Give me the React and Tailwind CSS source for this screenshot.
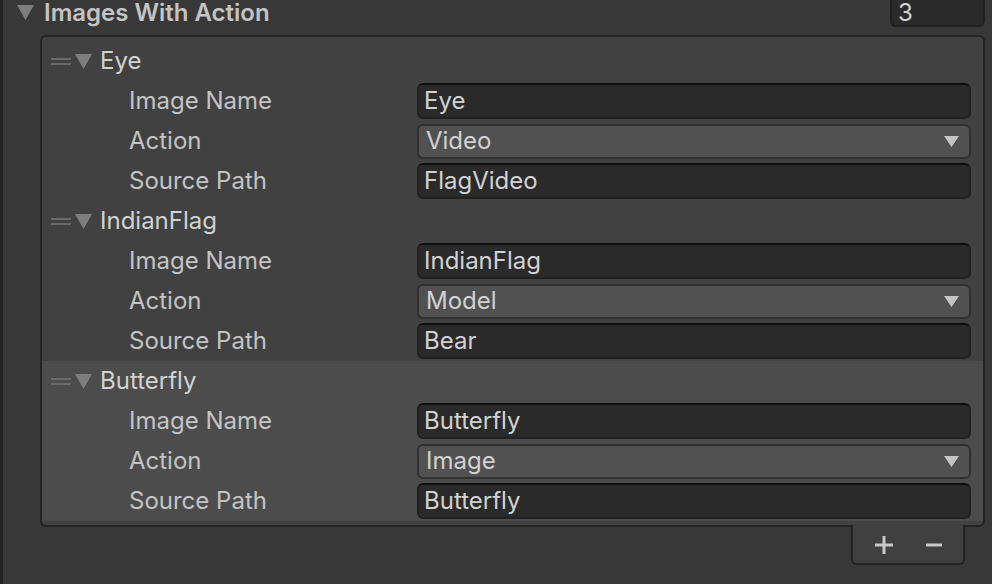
import React from 'react';

const elements = [
  { name: 'Eye', imageName: 'Eye', action: 'Video', source: 'FlagVideo' },
  { name: 'IndianFlag', imageName: 'IndianFlag', action: 'Model', source: 'Bear' },
  { name: 'Butterfly', imageName: 'Butterfly', action: 'Image', source: 'Butterfly', selected: true },
];

function Triangle({ className }) {
  return (
    <svg width="17" height="15" viewBox="0 0 17 15" className={className}>
      <path d="M0 0 H17 L8.5 15 Z" fill="currentColor" />
    </svg>
  );
}

function TextField({ value }) {
  return (
    <div className="h-[36px] flex-1 flex items-center rounded-[6px] bg-[#2a2a2a] border-2 border-[#212121] border-t-[#0f0f0f] px-[5px] text-[#d2d2d2]">
      {value}
    </div>
  );
}

function Dropdown({ value }) {
  return (
    <div className="h-[35px] flex-1 flex items-center justify-between rounded-[6px] bg-[#515151] border-2 border-[#303030] pl-[7px] pr-[10px] text-[#d2d2d2]">
      <span>{value}</span>
      <svg width="15" height="11" viewBox="0 0 15 11">
        <path d="M0 0 H15 L7.5 11 Z" fill="#c4c4c4" />
      </svg>
    </div>
  );
}

function Row({ label, children }) {
  return (
    <div className="h-[40px] flex items-center pr-[12px]">
      <div className="w-[375px] pl-[87px] text-[#c4c4c4]">{label}</div>
      {children}
    </div>
  );
}

function Element({ el }) {
  return (
    <div className={el.selected ? 'bg-[#4c4c4c]' : ''}>
      <div className="h-[40px] flex items-center">
        <div className="ml-[9px] w-[20px] flex flex-col gap-[3px]">
          <div className="h-[2px] bg-[#6a6a6a]" />
          <div className="h-[2px] bg-[#6a6a6a]" />
        </div>
        <Triangle className="ml-[4px] text-[#7e7e7e]" />
        <span className="ml-[8px] text-[#d2d2d2]">{el.name}</span>
      </div>
      <Row label="Image Name">
        <TextField value={el.imageName} />
      </Row>
      <Row label="Action">
        <Dropdown value={el.action} />
      </Row>
      <Row label="Source Path">
        <TextField value={el.source} />
      </Row>
    </div>
  );
}

export default function App() {
  return (
    <div className="w-[992px] h-[584px] bg-[#383838] flex overflow-hidden font-['Inter',sans-serif] text-[24px] leading-[26px]">
      <div className="w-[3px] bg-[#232323]" />
      <div className="flex-1 flex flex-col">
        {/* foldout header + array size */}
        <div className="h-[35px] flex items-start pr-[7px]">
          <Triangle className="ml-[14px] mt-[5px] text-[#7e7e7e]" />
          <span className="ml-[10px] font-semibold text-[#c4c4c4] leading-[25px]">Images With Action</span>
          <div className="ml-auto w-[95px] h-[27px] rounded-b-[6px] bg-[#2a2a2a] border-2 border-t-0 border-[#212121] pl-[6px] flex items-center text-[#d2d2d2]">
            3
          </div>
        </div>

        {/* reorderable list */}
        <div className="ml-[37px] mr-[7px] rounded-[6px] border-2 border-[#232323] bg-[#414141] pt-[4px] pb-[4px]">
          {elements.map((el) => (
            <Element key={el.name} el={el} />
          ))}
        </div>

        {/* add / remove footer */}
        <div className="flex justify-end mr-[27px]">
          <div className="relative -mt-[2px] w-[114px] h-[40px] rounded-b-[6px] border-2 border-t-0 border-[#232323] bg-[#404040] flex items-center justify-center gap-[32px] pt-[2px]">
            <svg width="20" height="20" viewBox="0 0 20 20">
              <path d="M10 1 V19 M1 10 H19" stroke="#c8c8c8" strokeWidth="3" />
            </svg>
            <svg width="16" height="20" viewBox="0 0 16 20">
              <path d="M0 10 H16" stroke="#c8c8c8" strokeWidth="3" />
            </svg>
          </div>
        </div>
      </div>
    </div>
  );
}
